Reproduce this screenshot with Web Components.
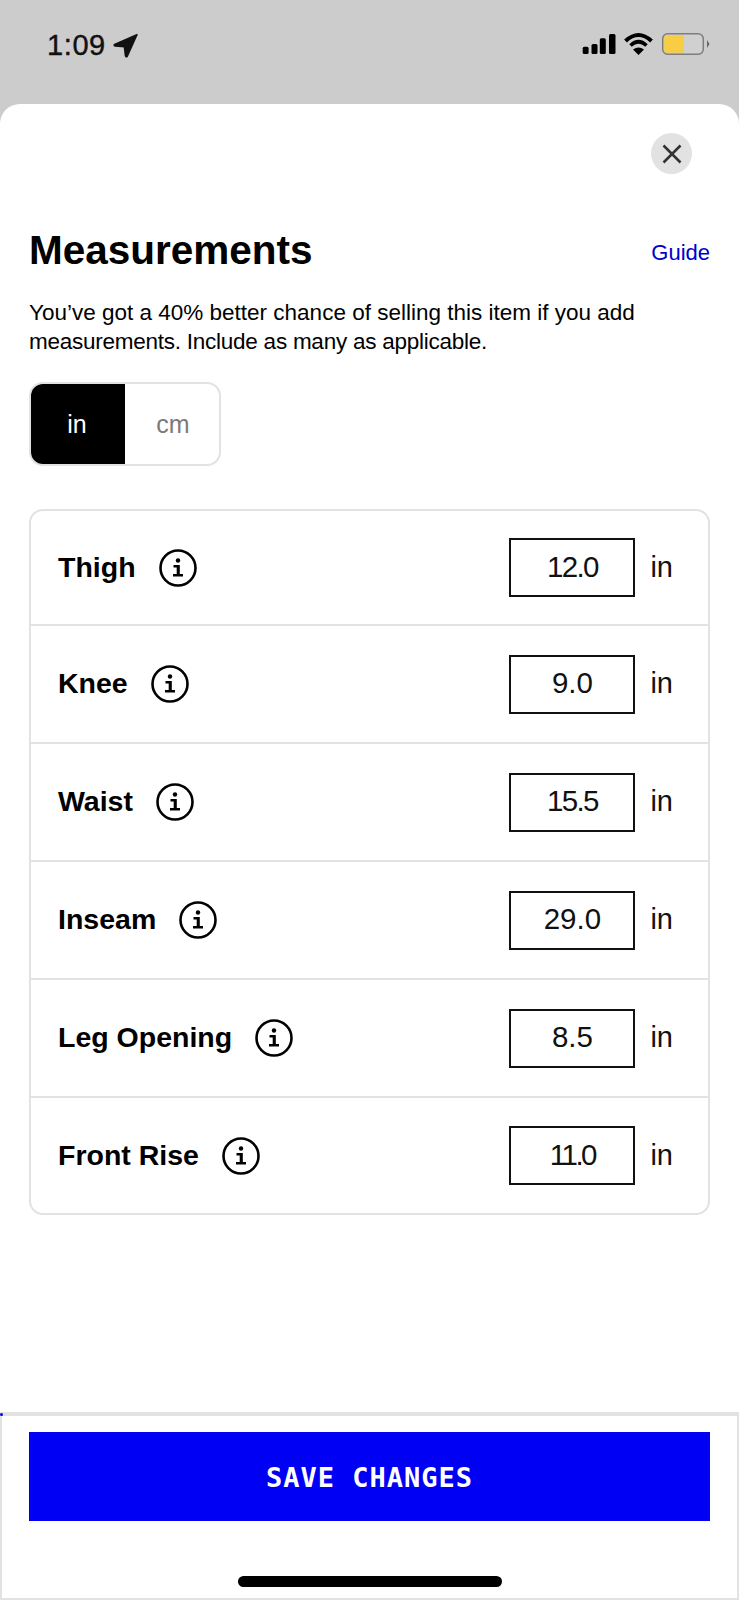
<!DOCTYPE html>
<html lang="en">
<head>
<meta charset="utf-8">
<title>Measurements</title>
<style>
  html, body { margin: 0; padding: 0; background: #cccccc; }
  body { width: 739px; height: 1600px; overflow: hidden; font-family: "Liberation Sans", Arial, sans-serif; color: #000; display: flex; flex-direction: column; }
</style>
</head>
<body>
<status-bar></status-bar>
<measure-sheet>
  <measure-row label="Thigh" value="12.0" spacing="-1.6px"></measure-row>
  <measure-row label="Knee" value="9.0"></measure-row>
  <measure-row label="Waist" value="15.5" spacing="-1.6px"></measure-row>
  <measure-row label="Inseam" value="29.0"></measure-row>
  <measure-row label="Leg Opening" value="8.5"></measure-row>
  <measure-row label="Front Rise" value="11.0" spacing="-2.5px"></measure-row>
</measure-sheet>
<script>
class StatusBar extends HTMLElement {
  constructor() {
    super();
    this.shadowDOM = this.attachShadow({ mode: 'open' });
    this.shadowDOM.innerHTML = `
    <style>
      :host {
        display: flex;
        flex: none;
        height: 104px;
        box-sizing: border-box;
        padding: 29px 27px 0 47px;
        justify-content: space-between;
        align-items: flex-start;
        background: #cccccc;
      }
      .left, .right { display: flex; align-items: center; height: 32px; }
      .time { font: 400 29px/32px "Liberation Sans", Arial, sans-serif; color: #111; letter-spacing: .6px; -webkit-text-stroke: .4px #111; }
      .left svg { margin-left: 7px; }
      .right svg { display: block; }
    </style>
    <div class="left">
      <span class="time">1:09</span>
      <svg width="25" height="25" viewBox="0 0 23 23"><path d="M22 1.500 L1.500 10.500 Q0.500 11.500 2 12 L10.500 12.500 L11.500 21 Q12 22.500 13 21.500 Z" fill="#111" stroke="#111" stroke-width="1.500" stroke-linejoin="round"/></svg>
    </div>
    <div class="right">
      <svg width="130" height="32" viewBox="0 0 130 32">
        <g fill="#000">
          <rect x="0.700" y="17.700" width="5.900" height="7.300" rx="1.500"/>
          <rect x="9.500" y="15" width="6" height="10" rx="1.500"/>
          <rect x="17.800" y="9.300" width="6" height="15.700" rx="1.500"/>
          <rect x="27" y="5" width="6.500" height="20" rx="1.500"/>
          <path d="M43.500 12 Q56.500 0 69.500 12" fill="none" stroke="#000" stroke-width="4"/>
          <path d="M48.500 16.500 Q56.500 9 64.500 16.500" fill="none" stroke="#000" stroke-width="3.600"/>
          <path d="M51 20.500 L56.500 26 L62 20.500 Q56.500 16.500 51 20.500 Z"/>
        </g>
        <rect x="80.700" y="4.700" width="40.600" height="20.600" rx="5" fill="#d0d0d0" stroke="#7d7d7d" stroke-width="1.500"/>
        <path d="M84.500 6.200 H102 V23.800 H84.500 Q82.200 23.800 82.200 21 V9 Q82.200 6.200 84.500 6.200 Z" fill="#f6cd43"/>
        <path d="M125 11 L127.500 15 L125 19 Z" fill="#666"/>
      </svg>
    </div>
    `;
  }
}

class MeasureRow extends HTMLElement {
  constructor() {
    super();
    this.shadowDOM = this.attachShadow({ mode: 'open' });
  }

  connectedCallback() {
    this.shadowDOM.innerHTML = `
    <style>
      * { box-sizing: border-box; }
      :host {
        display: flex;
        flex: none;
        box-sizing: border-box;
        height: 118px;
        align-items: center;
        padding: 0 35px 0 27px;
        border-bottom: 2px solid #e2e2e2;
      }
      :host(:first-child) { height: 115px; }
      :host(:last-child) { border-bottom: 0; height: 115px; }
      .label { font: 700 28.500px/36px "Liberation Sans", Arial, sans-serif; color: #000; padding-bottom: 2px; }
      svg { margin-left: 23px; flex: none; display: block; }
      .box {
        margin-left: auto;
        width: 126px;
        height: 59px;
        border: 2px solid #111;
        display: flex;
        align-items: center;
        justify-content: center;
        padding-bottom: 2px;
        font: 400 29.500px/34px "Liberation Sans", Arial, sans-serif;
        letter-spacing: ${this.getAttribute('spacing') || 'normal'};
        color: #111;
      }
      .unit { margin-left: 15px; font: 400 29px/34px "Liberation Sans", Arial, sans-serif; color: #111; padding-bottom: 2px; }
    </style>
    <span class="label">${this.getAttribute('label')}</span>
    <svg width="38" height="38" viewBox="0 0 38 38">
      <circle cx="19" cy="19" r="17.500" fill="none" stroke="#000" stroke-width="2.600"/>
      <circle cx="19" cy="11.500" r="2.200" fill="#000"/>
      <path d="M14.500 16 H20.800 V25 H24 V27.500 H14 V25 H17.700 V18.500 H14.500 Z" fill="#000"/>
    </svg>
    <div class="box">${this.getAttribute('value')}</div>
    <span class="unit">in</span>
    `;
  }
}

class MeasureSheet extends HTMLElement {
  constructor() {
    super();
    this.shadowDOM = this.attachShadow({ mode: 'open' });
    this.shadowDOM.innerHTML = `
    <style>
      * { box-sizing: border-box; }
      :host {
        display: flex;
        flex: 1;
        flex-direction: column;
        background: #fff;
        border-radius: 20px 20px 0 0;
        font-family: "Liberation Sans", Arial, sans-serif;
      }
      .close-wrap { display: flex; justify-content: flex-end; padding: 29px 47px 0 0; }
      .close {
        width: 41px; height: 41px; border-radius: 50%;
        background: #e2e2e2;
        display: flex; align-items: center; justify-content: center;
      }
      .body { flex: 1; padding: 0 29px; display: flex; flex-direction: column; }
      .head { display: flex; justify-content: space-between; align-items: center; margin-top: 52px; height: 48px; }
      h1 { margin: 0; font: 700 40.500px/48px "Liberation Sans", Arial, sans-serif; }
      .guide { font-size: 22px; color: #0000cc; padding-top: 6px; }
      p { margin: 24px 0 0; font-size: 22.500px; line-height: 29px; color: #000; }
      p span { letter-spacing: -.25px; }
      .toggle {
        margin-top: 26px;
        width: 192px; height: 84px;
        border: 2px solid #e2e2e2;
        border-radius: 14px;
        display: flex;
        overflow: hidden;
        font-size: 25px;
      }
      .toggle span { display: flex; align-items: center; justify-content: center; }
      .toggle .on { width: 96px; margin: -2px 0 -2px -2px; background: #000; color: #fff; border-radius: 14px 0 0 14px; }
      .toggle .off { flex: 1; color: #7a7a7a; padding-left: 2px; }
      .table {
        margin-top: 43px;
        height: 706px;
        border: 2px solid #e2e2e2;
        border-radius: 14px;
        display: flex;
        flex-direction: column;
      }
      .foot {
        flex: none;
        height: 188px;
        border: 2px solid #e2e2e2;
        border-top-width: 4px;
        padding: 16px 27px 0;
        position: relative;
        display: flex;
        flex-direction: column;
      }
      .foot::before { content: ""; position: absolute; left: -2px; top: -3px; width: 3px; height: 3px; background: #0000cc; border-radius: 50%; }
      .save {
        height: 89px;
        background: #0000f5;
        color: #fff;
        display: flex; align-items: center; justify-content: center;
        font: 700 27px/30px "DejaVu Sans Mono", monospace;
        letter-spacing: 1px;
        padding-top: 2px;
      }
      .home { align-self: center; margin: 55px 0 0; width: 264px; height: 11px; border-radius: 6px; background: #000; }
    </style>
    <div class="close-wrap">
      <div class="close">
        <svg width="22" height="22" viewBox="0 0 22 22"><path d="M2.500 2.500 L19.500 19.500 M19.500 2.500 L2.500 19.500" stroke="#333" stroke-width="2.600" fill="none"/></svg>
      </div>
    </div>
    <div class="body">
      <div class="head"><h1>Measurements</h1><span class="guide">Guide</span></div>
      <p>You’ve got a 40% better chance of selling this item if you add<br><span>measurements. Include as many as applicable.</span></p>
      <div class="toggle"><span class="on">in</span><span class="off">cm</span></div>
      <div class="table"><slot></slot></div>
    </div>
    <div class="foot">
      <div class="save">SAVE CHANGES</div>
      <div class="home"></div>
    </div>
    `;
  }
}

customElements.define('status-bar', StatusBar);
customElements.define('measure-row', MeasureRow);
customElements.define('measure-sheet', MeasureSheet);
</script>
</body>
</html>
